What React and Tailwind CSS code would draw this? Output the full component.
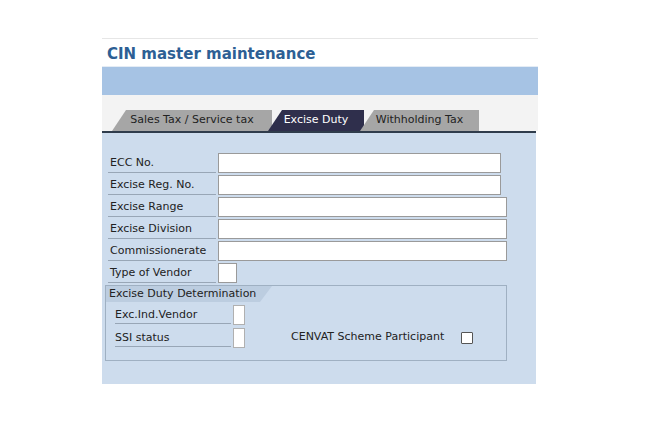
import React from 'react';

const font = { fontFamily: 'Tahoma, "DejaVu Sans", "Liberation Sans", sans-serif' };

const Row = ({ label, w }) => (
  <div className="flex items-center h-[22px]">
    <div className="w-[108px] h-[20px] border-b border-[#98a6b6] text-[11px] text-[#222] pl-[2px] leading-[20px]">
      {label}
    </div>
    <div className={`ml-[2px] h-[20px] bg-white border border-[#9a9a9a] ${w}`} />
  </div>
);

const Tab = ({ label, active, w }) => (
  <div
    className={`h-[21px] ${w} flex items-center justify-center text-[11px] ${active ? 'bg-[#2f2f4c] text-white' : 'bg-[#a6a6a6] text-[#222]'}`}
    style={{ clipPath: 'polygon(14px 0, 100% 0, 100% 100%, 0 100%)' }}
  >
    {label}
  </div>
);

export default function App() {
  return (
    <div className="w-[658px] h-[442px] bg-white pt-[38px]" style={font}>
      <div className="ml-[102px] w-[436px]">
        <div className="border-t border-[#e6e6e6] h-[28px] pl-[5px] pt-[4px] text-[15px] font-bold text-[#2d5f94]">
          CIN master maintenance
        </div>
        <div className="h-[29px] bg-[#a6c3e4] border-t border-[#e4ecf5]" />
        <div className="bg-[#f3f3f3] pt-[15px] flex pl-[10px]">
          <Tab label="Sales Tax / Service tax" w="w-[160px]" />
          <Tab label="Excise Duty" active w="w-[96px] -ml-[4px]" />
          <Tab label="Withholding Tax" w="w-[119px] -ml-[4px]" />
        </div>
        <div className="w-[434px] h-[253px] bg-[#cddced] border-t-2 border-[#2f3c4c] pl-[6px] pt-[19px]">
          <Row label="ECC No." w="w-[283px]" />
          <Row label="Excise Reg. No." w="w-[283px]" />
          <Row label="Excise Range" w="w-[289px]" />
          <Row label="Excise Division" w="w-[289px]" />
          <Row label="Commissionerate" w="w-[289px]" />
          <Row label="Type of Vendor" w="w-[19px]" />
          <div className="mt-[1px] -ml-[3px] w-[402px] h-[76px] border border-[#9fb0c2]">
            <div
              className="w-[166px] h-[16px] bg-[#bccde0] text-[11px] text-[#222] pl-[3px] leading-[16px]"
              style={{ clipPath: 'polygon(0 0, 100% 0, calc(100% - 12px) 100%, 0 100%)' }}
            >
              Excise Duty Determination
            </div>
            <div className="pl-[9px] pt-[1px]">
              <div className="flex items-center h-[23px]">
                <div className="w-[116px] h-[19px] border-b border-[#98a6b6] text-[11px] text-[#222] leading-[19px]">Exc.Ind.Vendor</div>
                <div className="ml-[2px] w-[12px] h-[20px] bg-white border border-[#b0b0b0]" />
              </div>
              <div className="flex items-center h-[23px]">
                <div className="w-[116px] h-[19px] border-b border-[#98a6b6] text-[11px] text-[#222] leading-[19px]">SSI status</div>
                <div className="ml-[2px] w-[12px] h-[20px] bg-white border border-[#b0b0b0]" />
                <div className="ml-[46px] text-[11px] text-[#222]">CENVAT Scheme Participant</div>
                <div className="ml-[17px] w-[12px] h-[12px] bg-white border border-[#555] rounded-[1px]" />
              </div>
            </div>
          </div>
        </div>
      </div>
    </div>
  );
}
